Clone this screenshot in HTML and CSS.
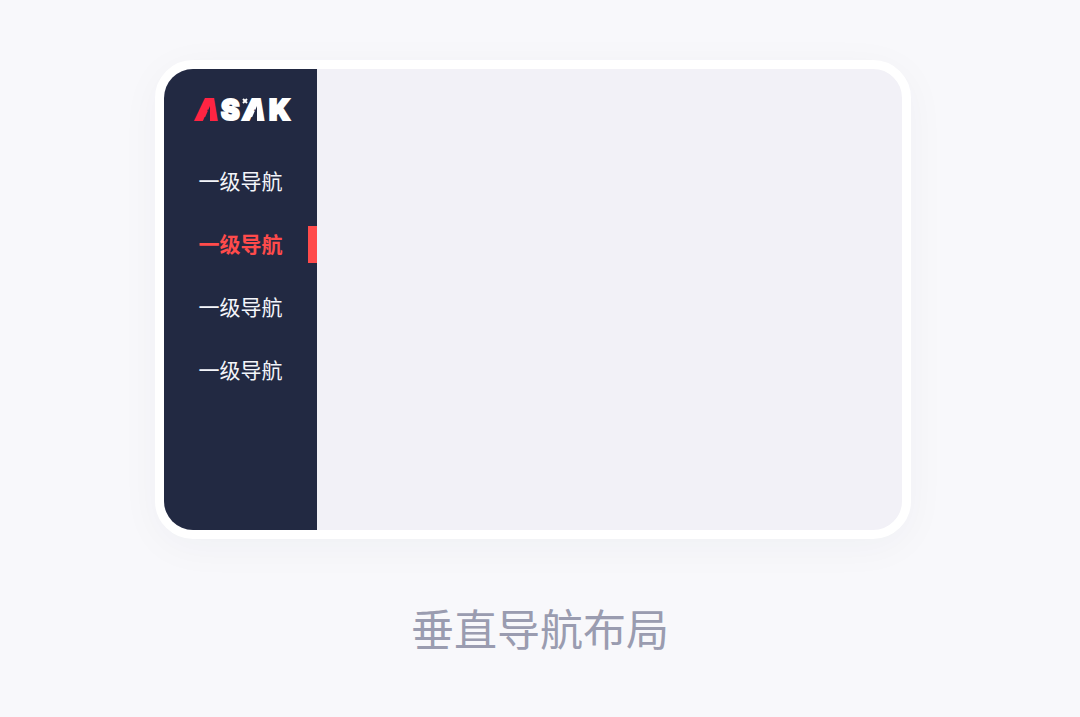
FILE: index.html
```
<!DOCTYPE html>
<html lang="zh-CN">
<head>
	<meta charset="utf-8">
	<title>垂直导航布局</title>
	<link rel="stylesheet" href="styles.css">
</head>
<body>
	<div class="box">
		<div class="side">
			<a class="logo" href="#">
				<svg width="112" height="40" viewBox="0 0 112 40">
					<g class="logo-text">
						<text class="red slant" x="8" y="31">A</text>
						<text x="33" y="31">S</text>
						<text class="slant" x="55" y="31">A</text>
						<text x="81" y="31">K</text>
					</g>
					<!-- 去掉横线 -->
					<path class="cut" d="M22 17v16h-7zM69 17v16h-7z"/>
					<!-- 小星 -->
					<path class="star" d="M55 10l4 4M59 10l-4 4"/>
				</svg>
			</a>
			<ul class="nav">
				<li><a href="#">一级导航</a></li>
				<li class="active"><a href="#">一级导航</a></li>
				<li><a href="#">一级导航</a></li>
				<li><a href="#">一级导航</a></li>
			</ul>
		</div>
		<div class="main"></div>
	</div>
	<p class="title">垂直导航布局</p>
</body>
</html>
```
FILE: styles.css
```
*{
	margin: 0;
	padding: 0;
	box-sizing: border-box;
}
body{
	background: #f8f8fb;
	font-family: "Noto Sans CJK SC", sans-serif;
}
ul,li{
	list-style: none;
}
a{
	color: inherit;
	text-decoration: none;
}
.box{
	display: flex;
	width: 70%;
	min-height: 479px;
	margin: 60px auto 0;
	border: 9px solid #fff;
	border-radius: 38px;
	background: #f2f1f7;
	overflow: hidden;
	box-shadow: 0 8px 40px rgba(34,41,66,0.04);
	position: relative;
	right: 7px;
}
.side{
	width: 153px;
	padding-top: 20px;
	background: #222942;
}
.main{
	flex: 1;
}
.logo{
	display: block;
	margin-left: 24px;
	height: 40px;
}
.logo svg{
	display: block;
}
.logo-text{
	font-family: Inter, sans-serif;
	font-size: 28px;
	font-weight: 900;
	fill: #fff;
	stroke: #fff;
	stroke-width: 2;
}
.logo-text .red{
	fill: #ff2442;
	stroke: #ff2442;
}
.logo-text .slant{
	font-style: italic;
}
.cut{
	fill: #222942;
}
.star{
	fill: none;
	stroke: #fff;
	stroke-width: 2;
}
.nav{
	display: flex;
	flex-direction: column;
	gap: 26px;
	margin-top: 34px;
}
.nav li{
	height: 37px;
	line-height: 35px;
	font-size: 21px;
	text-align: center;
	color: #f4f5fa;
}
.nav a{
	display: block;
	height: 37px;
}
.nav .active a{
	padding-left: 9px;
	border-right: 9px solid #ff4b4b;
	color: #ff4b4b;
	font-weight: bold;
}
.title{
	margin-top: 56px;
	font-size: 43px;
	line-height: 64px;
	text-align: center;
	color: #9a9cb0;
}
```
